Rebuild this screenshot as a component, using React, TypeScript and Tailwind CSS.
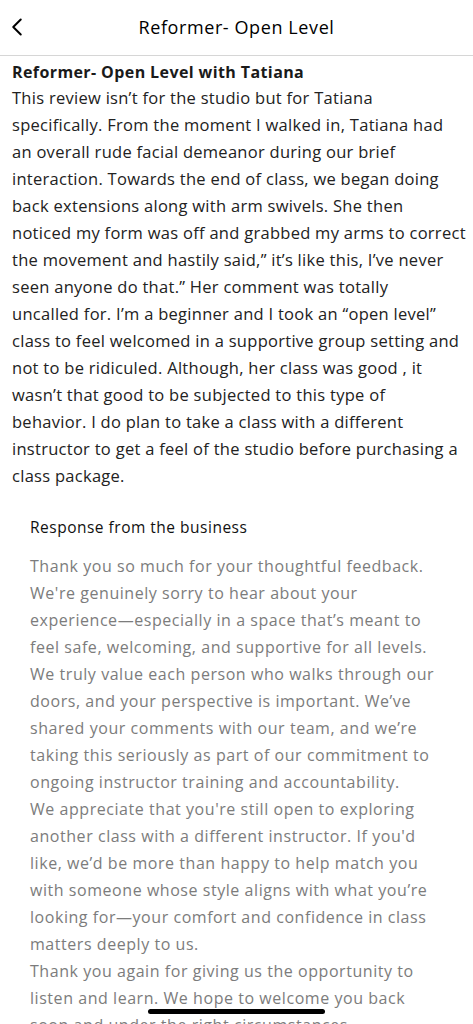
import { ChevronLeft } from 'lucide-react';

const REVIEW = [
  "This review isn’t for the studio but for Tatiana",
  "specifically. From the moment I walked in, Tatiana had",
  "an overall rude facial demeanor during our brief",
  "interaction. Towards the end of class, we began doing",
  "back extensions along with arm swivels. She then",
  "noticed my form was off and grabbed my arms to correct",
  "the movement and hastily said,” it’s like this, I’ve never",
  "seen anyone do that.” Her comment was totally",
  "uncalled for. I’m a beginner and I took an “open level”",
  "class to feel welcomed in a supportive group setting and",
  "not to be ridiculed. Although, her class was good , it",
  "wasn’t that good to be subjected to this type of",
  "behavior. I do plan to take a class with a different",
  "instructor to get a feel of the studio before purchasing a",
  "class package.",
];

const RESPONSE = [
  "Thank you so much for your thoughtful feedback.",
  "We're genuinely sorry to hear about your",
  "experience—especially in a space that’s meant to",
  "feel safe, welcoming, and supportive for all levels.",
  "We truly value each person who walks through our",
  "doors, and your perspective is important. We’ve",
  "shared your comments with our team, and we’re",
  "taking this seriously as part of our commitment to",
  "ongoing instructor training and accountability.",
  "We appreciate that you're still open to exploring",
  "another class with a different instructor. If you'd",
  "like, we’d be more than happy to help match you",
  "with someone whose style aligns with what you’re",
  "looking for—your comfort and confidence in class",
  "matters deeply to us.",
  "Thank you again for giving us the opportunity to",
  "listen and learn. We hope to welcome you back",
  "soon and under the right circumstances.",
];

export default function App() {
  return (
    <div className="relative h-[1024px] w-[473px] overflow-hidden bg-white font-['Open_Sans',sans-serif]">
      <header className="relative flex h-[56px] items-center justify-center border-b border-[#d6d6d6]">
        <ChevronLeft className="absolute left-[2px] top-[12px] h-[30px] w-[30px] text-black" strokeWidth={1.6} />
        <h1 className="text-[18px] tracking-[0.6px] text-black">Reformer- Open Level</h1>
      </header>

      <section className="px-[12px] pt-[5px]">
        <h2 className="text-[16px] font-bold leading-[22px] tracking-[0.4px] text-[#1a1a1a]">
          Reformer- Open Level with Tatiana
        </h2>
        <div className="pt-[1px] text-[16.5px] leading-[27px] tracking-[0.28px] text-[#222]">
          {REVIEW.map((line, i) => (
            <div key={i} className="whitespace-nowrap">{line}</div>
          ))}
        </div>
      </section>

      <section className="px-[30px] pt-[27px]">
        <h3 className="text-[15.5px] leading-[22px] tracking-[0.5px] text-[#111]">Response from the business</h3>
        <div className="pt-[15px] text-[16px] leading-[27px] tracking-[0.55px] text-[#7c7c7c]">
          {RESPONSE.map((line, i) => (
            <div key={i} className="whitespace-nowrap">{line}</div>
          ))}
        </div>
      </section>

      <div className="absolute bottom-[10px] left-[148px] h-[5px] w-[177px] rounded-full bg-black" />
    </div>
  );
}
